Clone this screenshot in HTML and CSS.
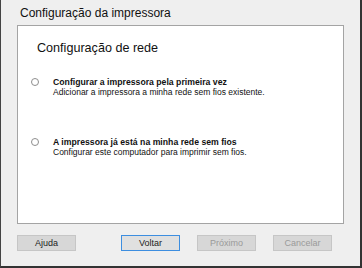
FILE: index.html
```html
<!DOCTYPE html>
<html lang="pt">
<head>
    <meta charset="UTF-8">
    <meta name="viewport" content="width=device-width, initial-scale=1.0">
    <title>Configuração da impressora</title>
    <link rel="stylesheet" href="styles.css">
</head>
<body>
    <div class="janela">
        <div class="titulo">Configuração da impressora</div>

        <div class="painel">
            <h2>Configuração de rede</h2>

            <label class="opcao">
                <span class="radio"></span>
                <span class="texto">
                    <strong>Configurar a impressora pela primeira vez</strong>
                    <span>Adicionar a impressora a minha rede sem fios existente.</span>
                </span>
            </label>

            <label class="opcao">
                <span class="radio"></span>
                <span class="texto">
                    <strong>A impressora já está na minha rede sem fios</strong>
                    <span>Configurar este computador para imprimir sem fios.</span>
                </span>
            </label>
        </div>

        <div class="botoes">
            <button class="botao">Ajuda</button>
            <button class="botao ativo">Voltar</button>
            <button class="botao" disabled>Próximo</button>
            <button class="botao" disabled>Cancelar</button>
        </div>
    </div>
</body>
</html>
```

FILE: styles.css
```css
/* Janela de configuração */
* {
    box-sizing: border-box;
}

body {
    margin: 0;
    font-family: 'Liberation Sans', Arial, sans-serif;
    color: #000;
    background: #efefef;
}

.janela {
    width: 362px;
    height: 268px;
    background: #efefef;
    border-left: 1px solid #444;
    border-right: 2px solid #333;
    border-bottom: 2px solid #333;
    display: flex;
    flex-direction: column;
}

.titulo {
    font-size: 12px;
    line-height: 16px;
    padding: 5px 0 0 19px;
    height: 25px;
    color: #111;
}

.painel {
    margin: 0 16px 0 16px;
    height: 199px;
    background: #fff;
    border: 1px solid #a4a4a4;
    padding: 13px 18px 0 18px;
}

h2 {
    font-size: 12.6px;
    font-weight: normal;
    line-height: 18px;
    margin: 0 0 20px 1px;
    color: #111;
}

.opcao {
    display: flex;
    align-items: flex-start;
    height: 60px;
}

.radio {
    width: 8px;
    height: 8px;
    border: 1px solid #8e8e8e;
    border-radius: 50%;
    margin: 1px 14px 0 -5px;
    background: #fff;
}

.texto {
    display: flex;
    flex-direction: column;
    font-size: 8.5px;
    line-height: 10px;
    color: #111;
}

.texto strong {
    font-weight: bold;
    font-size: 8.7px;
}

.botoes {
    display: flex;
    gap: 17px;
    padding: 11px 28px 0 16px;
}

.botao {
    width: 59px;
    height: 16px;
    padding: 0;
    font-family: 'Liberation Sans', Arial, sans-serif;
    font-size: 9px;
    color: #222;
    background: #d7d7d7;
    border: 1px solid #c6c6c6;
    border-radius: 0;
}

.botao.ativo {
    margin-left: auto;
    background: #e0e0e0;
    border-color: #3d8ee0;
}

.botao:disabled {
    color: #9a9a9a;
}
```
